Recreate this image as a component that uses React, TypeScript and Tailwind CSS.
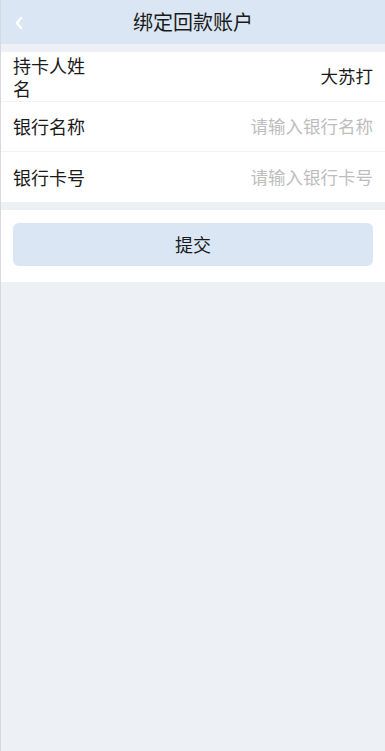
import { useState } from "react";

const font = { fontFamily: '"Noto Sans CJK SC", "Noto Sans", sans-serif' };

function BackIcon() {
  return (
    <svg width="10" height="14" viewBox="0 0 10 14" fill="none" stroke="#ffffff" strokeWidth="2.4" strokeLinecap="round" strokeLinejoin="round">
      <path d="M7 2L3 7l4 5" />
    </svg>
  );
}

interface RowProps {
  label: string;
  value?: string;
  placeholder?: string;
  last?: boolean;
}

function FieldRow({ label, value, placeholder, last }: RowProps) {
  const [text, setText] = useState(value ?? "");
  return (
    <div className={`flex items-center h-[50px] px-3 bg-white ${last ? "" : "border-b border-[#f1f2f4]"}`}>
      <span className="w-[76px] shrink-0 text-[18px] leading-[23px] text-[#1a1a1a] break-all">{label}</span>
      <input
        value={text}
        onChange={(e) => setText(e.target.value)}
        placeholder={placeholder}
        className="flex-1 min-w-0 text-right text-[17.5px] text-[#1a1a1a] bg-transparent outline-none placeholder:text-[#bdbdbd]"
        style={font}
      />
    </div>
  );
}

export default function App() {
  return (
    <div className="min-h-[751px] bg-[#edf0f5] border-l border-[#d6d9de]" style={font}>
      <header className="relative h-[44px] flex items-center justify-center bg-[#dae6f3]">
        <button className="absolute left-[13px] top-[16px]">
          <BackIcon />
        </button>
        <h1 className="text-[20px] text-[#1a1a1a]">绑定回款账户</h1>
      </header>

      <div className="mt-2">
        <FieldRow label="持卡人姓名" value="大苏打" />
        <FieldRow label="银行名称" placeholder="请输入银行名称" />
        <FieldRow label="银行卡号" placeholder="请输入银行卡号" last />
      </div>

      <div className="mt-2 bg-white px-3 pt-[13px] pb-[16px]">
        <button className="w-full h-[43px] rounded-md bg-[#dae6f3] text-[18px] text-[#1a1a1a]">提交</button>
      </div>
    </div>
  );
}
